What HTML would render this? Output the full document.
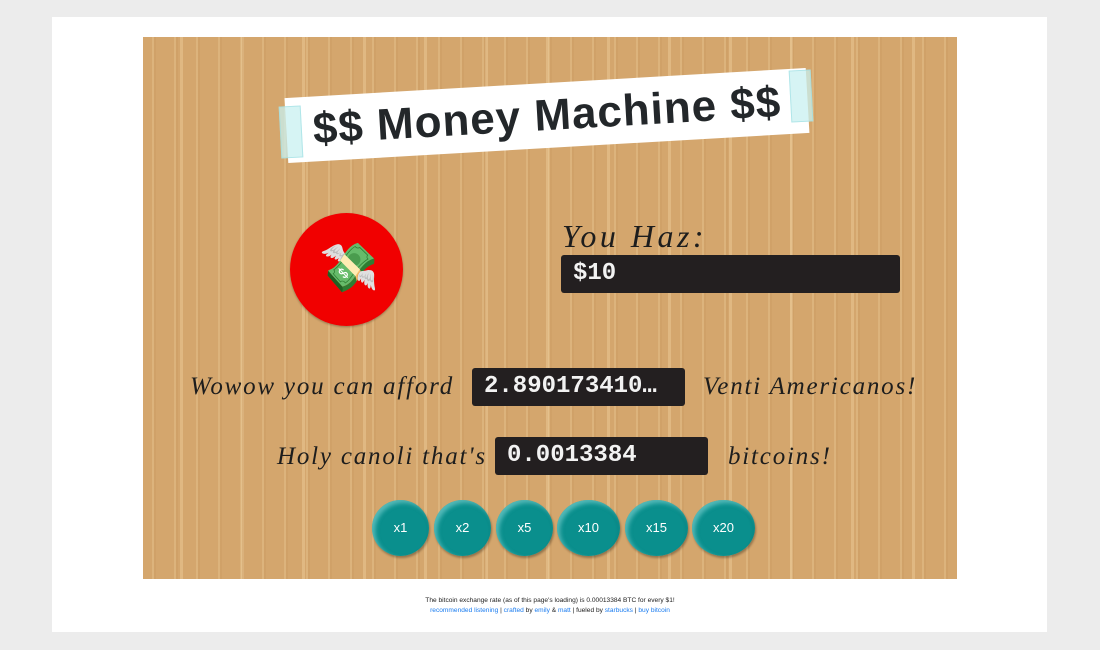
<!DOCTYPE html>
<html><head><meta charset="utf-8"><style>
*{margin:0;padding:0;box-sizing:border-box}
body{width:1100px;height:650px;background:#ececec;position:relative;overflow:hidden;font-family:"Liberation Sans",sans-serif}
.card{position:absolute;left:52px;top:17px;width:995px;height:615px;background:#fff}
.board{position:absolute;left:143px;top:37px;width:814px;height:542px;
background:
repeating-linear-gradient(90deg,rgba(255,235,190,0) 0 9px,rgba(240,210,160,.3) 9px 11px,rgba(170,120,60,.1) 11px 13px,rgba(255,235,190,0) 13px 22px),
repeating-linear-gradient(90deg,rgba(0,0,0,0) 0 37px,rgba(250,225,180,.3) 37px 40px,rgba(0,0,0,0) 40px 61px),
#d4a66d;overflow:hidden}
.abs{position:absolute}
.banner{position:absolute;left:286px;top:83px;width:522px;height:65px;background:#fff;transform:rotate(-3.3deg);transform-origin:center}
.title{position:absolute;left:0;top:0;width:100%;text-align:center;line-height:65px;font-weight:bold;font-size:44px;color:#23272a;letter-spacing:1px;font-family:"Liberation Sans",sans-serif}
.tape{position:absolute;width:22px;height:52px;background:rgba(200,240,240,.75);border:1px solid rgba(150,220,225,.6)}
.script{position:absolute;font-family:"Liberation Serif",serif;font-style:italic;color:#1d1d1d;font-size:25px;letter-spacing:1.8px;white-space:nowrap}
.box{position:absolute;background:#231f20;border-radius:3px;color:#f2f2f2;font-family:"Liberation Mono",monospace;font-weight:bold;font-size:24px;padding-left:12px;white-space:nowrap}
.btn{position:absolute;top:500px;height:56px;border-radius:50%;background:radial-gradient(circle at 50% 55%,#0a8f8d 60%,#067572 100%);box-shadow:inset 3px 3px 4px rgba(160,235,235,.5),1px 2px 2px rgba(0,0,0,.3);color:#fff;font-size:13px;text-align:center;line-height:56px}
.foot{position:absolute;left:0;width:1100px;text-align:center;font-size:6.6px;color:#222}
.foot a{color:#1a7cf0;text-decoration:none}
</style></head><body>
<div class="card"></div>
<div class="board"></div>
<div class="banner"><div class="title">$$ Money Machine $$</div></div>
<div class="tape" style="left:280px;top:106px;transform:rotate(-3deg)"></div>
<div class="tape" style="left:790px;top:70px;transform:rotate(-3deg)"></div>
<div class="abs" style="left:290px;top:213px;width:113px;height:113px;border-radius:50%;background:radial-gradient(circle at 50% 45%,#f10000 70%,#d20000 100%);box-shadow:0 1px 2px rgba(0,0,0,.3)"></div>
<div class="abs" style="left:319px;top:240px;font-size:48px;line-height:56px;font-family:'Noto Color Emoji',sans-serif">💸</div>
<div class="script" style="left:562px;top:218px;font-size:32px;letter-spacing:3.5px">You Haz:</div>
<div class="box" style="left:561px;top:255px;width:339px;height:38px;line-height:38px">$10</div>
<div class="script" style="left:190px;top:373px">Wowow you can afford</div>
<div class="box" style="left:472px;top:368px;width:213px;height:38px;line-height:38px">2.890173410…</div>
<div class="script" style="left:703px;top:373px">Venti Americanos!</div>
<div class="script" style="left:277px;top:443px">Holy canoli that's</div>
<div class="box" style="left:495px;top:437px;width:213px;height:38px;line-height:38px">0.0013384</div>
<div class="script" style="left:728px;top:443px">bitcoins!</div>
<div class="btn" style="left:372px;width:57px">x1</div>
<div class="btn" style="left:434px;width:57px">x2</div>
<div class="btn" style="left:496px;width:57px">x5</div>
<div class="btn" style="left:557px;width:63px">x10</div>
<div class="btn" style="left:625px;width:63px">x15</div>
<div class="btn" style="left:692px;width:63px">x20</div>
<div class="foot" style="top:597px">The bitcoin exchange rate (as of this page's loading) is 0.00013384 BTC for every $1!</div>
<div class="foot" style="top:607px"><a>recommended listening</a> | <a>crafted</a> by <a>emily</a> &amp; <a>matt</a> | fueled by <a>starbucks</a> | <a>buy bitcoin</a></div>
</body></html>
